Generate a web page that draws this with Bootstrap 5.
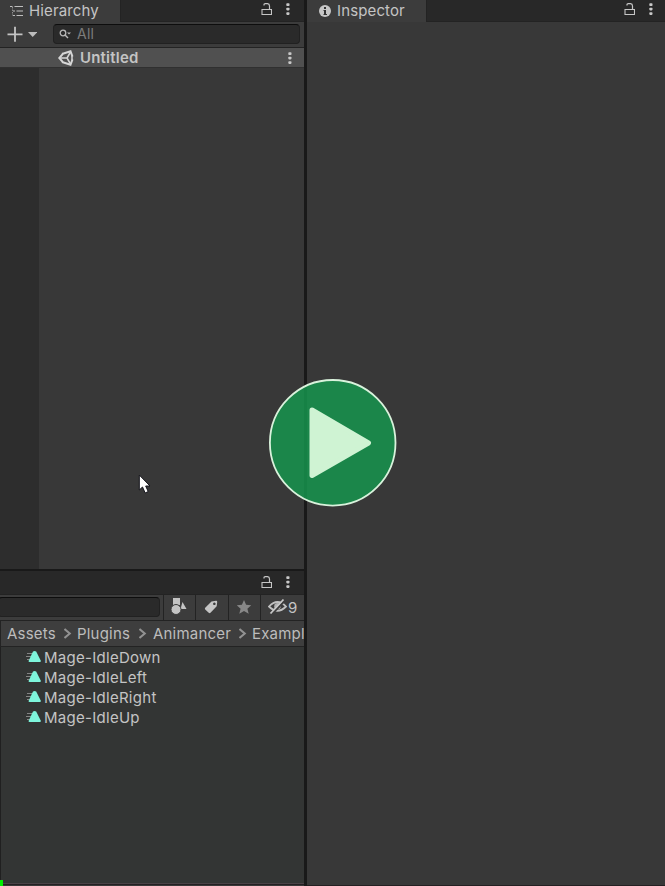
<!DOCTYPE html>
<html lang="en">
<head>
<meta charset="utf-8">
<title>Editor</title>
<meta name="viewport" content="width=device-width, initial-scale=1">
<link href="https://cdn.jsdelivr.net/npm/bootstrap@5.3.0/dist/css/bootstrap.min.css" rel="stylesheet">
<style>
body{font-family:Inter,"Liberation Sans",sans-serif;font-size:15px;line-height:20px;letter-spacing:.28px;color:#c4c4c4;background:#383838;width:665px;height:886px}
svg{display:block;flex:none}
.left-side{width:304px}
.splitter{width:3px;background:#191919}
.tabs{height:22px;background:#282828;border-bottom:1px solid #232323}
.tab-on{height:22px;background:#3c3c3c;border-right:1px solid #232323;padding-top:1px;letter-spacing:.13px}
.tab-h{width:121px;padding-left:10px}
.tab-i{width:120px;padding-left:12px}
.tools{height:26px;background:#3c3c3c;border-bottom:1px solid #232323}
.finder{padding-bottom:1px}
.field{background:#2a2a2a;border:1px solid #212121;border-top-color:#0d0d0d;border-radius:4px;height:20px}
.find{width:247px;margin-left:16px;padding-left:5px;color:#7c7c7c;font-size:14px}
.scene{height:20px;background:#505050;border-bottom:1px solid #303030;padding-left:58px;letter-spacing:.2px}
.tree{height:501px}
.gutter{width:39px;background:#2d2d2d}
.ptabs{height:26px;background:#282828;border-top:2px solid #191919;border-bottom:1px solid #232323}
.cellb{border-left:1px solid #232323;height:25px}
.crumbs{height:26px;background:#3e3e3e;border-bottom:1px solid #232323;border-left:1px solid #232323;padding-left:6px;white-space:nowrap;letter-spacing:.2px;color:#bcbcbc}
.crumbs span{flex:none}
.assets{background:#333534;border-left:1px solid #202020;border-bottom:1px solid #4a4246;height:237px;padding-top:1px}
.asset{height:20px;padding-left:24px}
.asset svg{margin:2px 3px 0 0}
.play{left:268px;top:378px}
.pointer{left:138px;top:474px}
.progress-dot{left:0;top:880px;width:3px;height:6px;background:#00f000}
.foot{height:1px;background:#242022}
</style>
<script src="https://cdn.jsdelivr.net/npm/bootstrap@5.3.0/dist/js/bootstrap.bundle.min.js"></script>
</head>
<body class="d-flex overflow-hidden position-relative">
<svg width="0" height="0" class="position-absolute">
<defs>
<g id="lock"><path d="M1 6.500h9.500v5H1z" fill="none" stroke="#c6c6c6" stroke-width="1.100"/><path d="M3 2.400V1.800Q3 .7 4.200 .7H6.500Q8.500 .9 8.500 3V6" fill="none" stroke="#c6c6c6" stroke-width="1.200"/></g>
<g id="dots" fill="#c8c8c8"><rect x=".3" y=".3" width="3.200" height="2.700" rx=".8"/><rect x=".3" y="4.700" width="3.200" height="2.700" rx=".8"/><rect x=".3" y="9.200" width="3.200" height="2.700" rx=".8"/></g>
<g id="clip"><path d="M2 3.500h6M1 6.500h6M2 9.500h4" stroke="#858585" fill="none"/><path d="M8 1.600Q9.600 .2 11.200 1.600L15.800 10.800Q16 12 15 12H4.500Q3.200 12 3.700 10.800z" fill="#7ef5dc"/></g>
<g id="chev"><path d="M.5 1L5.800 5.500 .5 10" fill="none" stroke="#929292" stroke-width="2"/></g>
</defs>
</svg>
<section class="left-side d-flex flex-column flex-shrink-0 overflow-hidden">
 <div class="tabs d-flex">
  <div class="tab-on tab-h d-flex"><svg width="13" height="12" style="margin:4px 6px 0 0"><path d="M0 1.500h2.500M4.500 1.500h8.500" fill="none" stroke="#bebebe" stroke-width="1.200"/><path d="M2.500 2v8.500" stroke="#8c8c8c" fill="none" stroke-dasharray="1.500 1"/><path d="M3 6h2M6.500 6H13M3 10.500h2M6.500 10.500H13" fill="none" stroke="#bebebe" stroke-width="1.200"/></svg><span>Hierarchy</span></div>
  <svg class="ms-auto" width="11" height="13" style="margin-top:3px"><use href="#lock"/></svg>
  <svg width="4" height="13" style="margin:3px 14px 0 14px"><use href="#dots"/></svg>
 </div>
 <div class="tools finder d-flex align-items-center">
  <svg width="30" height="16" style="margin-left:7px"><path d="M8 .8v15M.5 8.300h15" stroke="#c4c4c4" stroke-width="1.800"/><path d="M21 6h9.500l-4.800 5z" fill="#bcbcbc"/></svg>
  <div class="field find d-flex align-items-center"><svg width="13" height="10" style="margin-right:5px"><circle cx="4" cy="4" r="2.800" fill="none" stroke="#b8b8b8" stroke-width="1.300"/><path d="M6 6l3 3" stroke="#b8b8b8" stroke-width="1.400"/><path d="M8 3.500h4l-2 2z" fill="#b8b8b8"/></svg><span>All</span></div>
 </div>
 <div class="scene d-flex">
  <svg width="16" height="16" viewBox="0 0 16 16" style="margin:2px 6px 0 0"><path d="M4 4L12.500 1.300 14.500 6.500M4 12L12.500 14.700 14.500 9.500M5.500 3.200L1.300 8l4.200 4.800" fill="none" stroke="#d6d6d6" stroke-width="2"/><path d="M3 8h6M9 8l3.500-6M9 8l3.500 6M14 5.500v5" fill="none" stroke="#d6d6d6" stroke-width="1.500"/></svg>
  <span class="fw-semibold">Untitled</span>
  <svg class="ms-auto" width="4" height="13" style="margin-right:12px;margin-top:4px"><use href="#dots"/></svg>
 </div>
 <div class="tree d-flex"><div class="gutter"></div></div>
 <div class="ptabs d-flex">
  <svg class="ms-auto" width="11" height="13" style="margin-top:5px"><use href="#lock"/></svg>
  <svg width="4" height="13" style="margin:5px 14px 0 14px"><use href="#dots"/></svg>
 </div>
 <div class="tools d-flex">
  <div class="field" style="width:162px;margin:2px 3px 0 -2px"></div>
  <div class="cellb" style="width:32px;padding:3px 0 0 7px"><svg width="17" height="17"><path d="M2 0h7v7H2z" fill="#c4c4c4"/><path d="M11.500 4L15.500 11H9.500z" fill="#c4c4c4"/><circle cx="5" cy="11.500" r="5" fill="#c4c4c4" stroke="#3c3c3c"/></svg></div>
  <div class="cellb" style="width:33px;padding:5px 0 0 8px"><svg width="15" height="15"><path fill-rule="evenodd" d="M7.500 1.500L12 .8Q13.300 .7 13.200 2l-.5 4.200-6.200 6.600Q5.500 13.500 4.700 12.800L1.200 9.500Q.5 8.600 1.200 7.800zM10.300 2.500a1.300 1.300 0 1 0 .1 0z" fill="#c4c4c4"/></svg></div>
  <div class="cellb" style="width:32px;padding:5px 0 0 8px"><svg width="15" height="14"><path d="M7 0l2.100 4.700 5.100.5-3.800 3.500 1.300 5.100L7 11.100l-4.700 2.700 1.300-5.100L-.2 5.200l5.100-.5z" fill="#888"/></svg></div>
  <div class="cellb d-flex flex-grow-1" style="padding:3px 0 0 7px"><svg width="20" height="18"><path d="M1 8.500Q9.500-.5 18 8.500 9.500 17 1 8.500z" fill="none" stroke="#c0c0c0" stroke-width="1.800"/><circle cx="9.500" cy="8.200" r="3.300" fill="#b0b0b0"/><path d="M4 16L17 2.500" stroke="#3c3c3c" stroke-width="2"/><path d="M2.500 15.500L15.500 1.500" stroke="#c8c8c8" stroke-width="1.800"/></svg><span>9</span></div>
 </div>
 <div class="crumbs d-flex align-items-center">
  <span style="width:57px">Assets</span><svg width="13" height="11"><use href="#chev"/></svg>
  <span style="width:62px">Plugins</span><svg width="14" height="11"><use href="#chev"/></svg>
  <span style="width:86px">Animancer</span><svg width="13" height="11"><use href="#chev"/></svg>
  <span>Exampl</span>
 </div>
 <div class="assets">
  <div class="asset d-flex"><svg width="16" height="14"><use href="#clip"/></svg><span>Mage-IdleDown</span></div>
  <div class="asset d-flex"><svg width="16" height="14"><use href="#clip"/></svg><span>Mage-IdleLeft</span></div>
  <div class="asset d-flex"><svg width="16" height="14"><use href="#clip"/></svg><span>Mage-IdleRight</span></div>
  <div class="asset d-flex"><svg width="16" height="14"><use href="#clip"/></svg><span>Mage-IdleUp</span></div>
 </div>
 <div class="foot"></div>
</section>
<div class="splitter flex-shrink-0"></div>
<section class="d-flex flex-column flex-grow-1">
 <div class="tabs d-flex">
  <div class="tab-on tab-i d-flex"><svg width="12" height="12" style="margin:4px 6px 0 0"><circle cx="6" cy="6" r="6" fill="#c8c8c8"/><path d="M5 2h2v2H5zM4.500 5H7v4h1v1H4.500V9H5V6h-.5z" fill="#333"/></svg><span>Inspector</span></div>
  <svg class="ms-auto" width="11" height="13" style="margin-top:3px"><use href="#lock"/></svg>
  <svg width="4" height="13" style="margin:3px 12px 0 14px"><use href="#dots"/></svg>
 </div>
 <div class="flex-grow-1"></div>
 <div class="foot"></div>
</section>
<svg class="play position-absolute" width="130" height="130"><circle cx="64.700" cy="64.800" r="62.800" fill="#16944e" fill-opacity=".85" stroke="#d9f2dc" stroke-width="1.800"/><path d="M44 32L100.500 65 44 97.500z" fill="#cff3d3" stroke="#cff3d3" stroke-width="5" stroke-linejoin="round"/></svg>
<svg class="pointer position-absolute" width="14" height="20"><path d="M1.300 1v15l3.200-3 2.700 6 3-1.500L7.700 12H12z" fill="#fff" stroke="#15151c"/></svg>
<div class="progress-dot position-absolute"></div>
</body>
</html>
